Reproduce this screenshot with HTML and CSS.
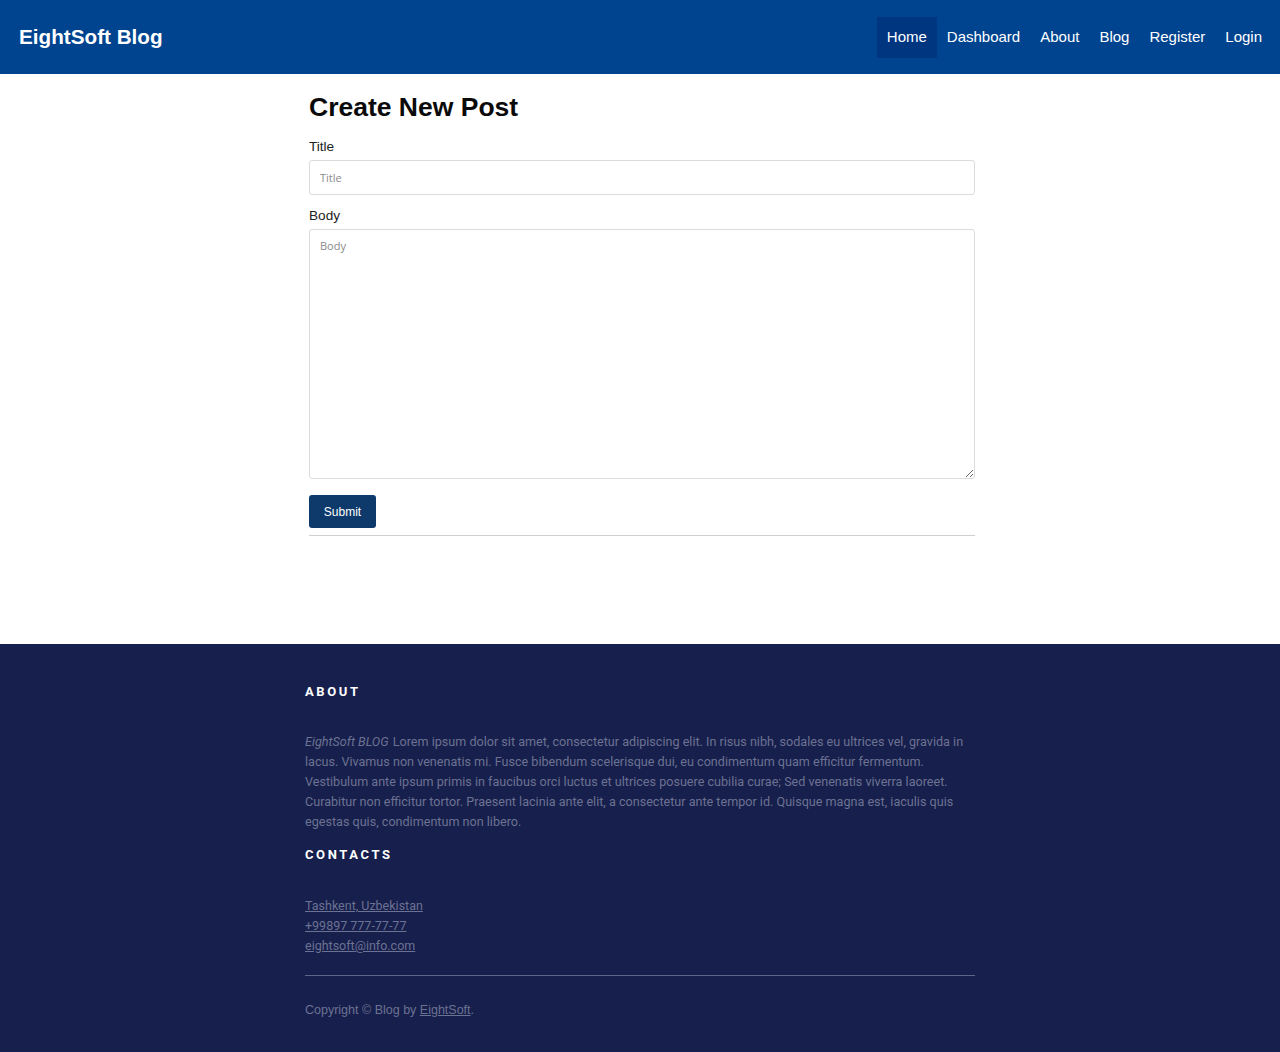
FILE: index.html
```html
<!DOCTYPE html>
<html lang="en">
<head>
<meta charset="utf-8">
<title>EightSoft Blog</title>
<link rel="stylesheet" href="styles.css">
</head>
<body>
<header class="navbar">
  <a class="brand" href="#">EightSoft Blog</a>
  <nav class="nav">
    <a class="nav-link active" href="#">Home</a>
    <a class="nav-link" href="#">Dashboard</a>
    <a class="nav-link" href="#">About</a>
    <a class="nav-link" href="#">Blog</a>
    <a class="nav-link" href="#">Register</a>
    <a class="nav-link" href="#">Login</a>
  </nav>
</header>
<main class="content">
  <h1 class="page-title">Create New Post</h1>
  <form class="post-form">
    <label class="label" for="title">Title</label>
    <input class="field" id="title" type="text" placeholder="Title">
    <label class="label" for="body">Body</label>
    <textarea class="field area" id="body" placeholder="Body"></textarea>
    <button class="btn" type="button">Submit</button>
  </form>
  <hr class="rule">
</main>
<footer class="footer">
  <div class="footer-inner">
    <h3 class="footer-heading">About</h3>
    <p class="footer-text"><em>EightSoft BLOG</em> Lorem ipsum dolor sit amet, consectetur adipiscing elit. In risus nibh, sodales eu ultrices vel, gravida in lacus. Vivamus non venenatis mi. Fusce bibendum scelerisque dui, eu condimentum quam efficitur fermentum. Vestibulum ante ipsum primis in faucibus orci luctus et ultrices posuere cubilia curae; Sed venenatis viverra laoreet. Curabitur non efficitur tortor. Praesent lacinia ante elit, a consectetur ante tempor id. Quisque magna est, iaculis quis egestas quis, condimentum non libero.</p>
    <h3 class="footer-heading contacts">Contacts</h3>
    <ul class="contact-list">
      <li><a href="#">Tashkent, Uzbekistan</a></li>
      <li><a href="#">+99897 777-77-77</a></li>
      <li><a href="#">eightsoft@info.com</a></li>
    </ul>
    <hr class="footer-rule">
    <p class="copyright">Copyright © Blog by <a href="#">EightSoft</a>.</p>
  </div>
</footer>
</body>
</html>
```
FILE: styles.css
```css
* { box-sizing: border-box; }
html, body { margin: 0; padding: 0; }
body {
  font-family: "Liberation Sans", Arial, sans-serif;
  background: #fff;
  color: #111;
}
.navbar {
  height: 74px;
  background: #00448f;
  display: flex;
  align-items: center;
  justify-content: space-between;
  padding: 0 8px 0 19px;
}
.brand {
  color: #fff;
  font-weight: bold;
  font-size: 20.7px;
  text-decoration: none;
}
.nav { display: flex; align-items: center; }
.nav-link {
  color: #fff;
  text-decoration: none;
  font-size: 15px;
  padding: 0 10px;
  height: 41px;
  line-height: 40px;
}
.nav-link.active { background: #003580; }
.content {
  width: 666px;
  margin: 0 auto;
  padding: 20px 0 108px;
  position: relative;
  left: 2px;
}
.page-title {
  margin: 0 0 16px;
  font-size: 26.5px;
  line-height: 28px;
  font-weight: bold;
  color: #0a0a0a;
  position: relative;
  top: -1px;
}
.post-form { display: flex; flex-direction: column; align-items: flex-start; }
.label {
  font-size: 13.6px;
  line-height: 16px;
  color: #222;
  margin-bottom: 6px;
  position: relative;
  top: 1px;
}
.field {
  width: 100%;
  height: 35px;
  border: 1px solid #dcdcdc;
  border-radius: 3px;
  padding: 0 10px;
  font-family: "Open Sans", sans-serif;
  font-size: 11px;
  margin: 0 0 12px;
  outline: none;
}
.field::placeholder { color: #8a8a8a; }
.area {
  height: 250px;
  padding: 8px 10px;
  margin-bottom: 16px;
  resize: vertical;
}
.btn {
  background: #0d3a6b;
  color: #fff;
  border: none;
  border-radius: 3px;
  width: 67px;
  height: 33px;
  font-family: "Liberation Sans", Arial, sans-serif;
  font-size: 12px;
  cursor: pointer;
}
.rule {
  margin: 7px 0 0;
  border: none;
  border-top: 1px solid #cfcfcf;
}
.footer {
  background: #171f4c;
  padding-top: 37px;
  padding-bottom: 34px;
}
.footer-inner {
  width: 670px;
  margin: 0 auto;
  font-family: Roboto, "Liberation Sans", sans-serif;
}
.footer-heading {
  margin: 0;
  color: #fff;
  font-size: 13px;
  line-height: 22px;
  letter-spacing: 2.6px;
  text-transform: uppercase;
  font-weight: bold;
  font-family: Roboto, "Liberation Sans", sans-serif;
}
.footer-text {
  margin: 29px 0 12px;
  color: #6c7292;
  font-size: 12.6px;
  line-height: 20px;
}
.footer-text em { font-style: italic; padding-right: 1px; }
.contacts { margin-bottom: 30px; }
.contact-list { list-style: none; margin: 0; padding: 0; }
.contact-list li { font-size: 12.5px; line-height: 20px; }
.contact-list a, .copyright a { color: #6c7292; }
.footer-rule {
  border: none;
  border-top: 1px solid #5e6587;
  margin: 19px 0 0;
}
.copyright {
  margin: 26px 0 0;
  color: #6c7292;
  font-family: "Liberation Sans", Arial, sans-serif;
  font-size: 12.5px;
  line-height: 16px;
}
```
